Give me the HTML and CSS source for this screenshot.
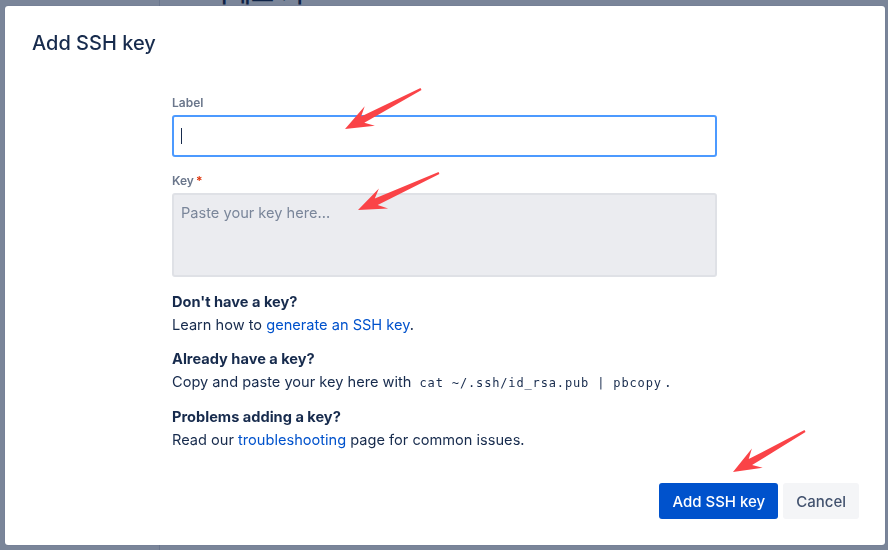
FILE: index.html
```html
<!DOCTYPE html>
<html lang="ko">
<head>
  <meta charset="UTF-8">
  <meta name="viewport" content="width=device-width, initial-scale=1.0">
  <title>Add SSH key</title>
  <link rel="stylesheet" href="styles.css">
</head>
<body>
  <div class="page">
    <div class="sidebar"></div>
    <div class="main">
      <h1 class="page-title">액세스 키</h1>
    </div>
  </div>

  <div class="blanket"></div>

  <div class="dialog">
    <div class="dialog-header">
      <h2>Add SSH key</h2>
    </div>
    <div class="dialog-body">
      <form class="form">
        <label class="field-label" for="label">Label</label>
        <div class="text-input focused"><span class="caret"></span></div>

        <label class="field-label" for="key">Key<span class="required">*</span></label>
        <div class="textarea">Paste your key here...</div>

        <div class="help">
          <h4>Don't have a key?</h4>
          <p>Learn how to <a href="#">generate an SSH key</a>.</p>
        </div>
        <div class="help">
          <h4>Already have a key?</h4>
          <p>Copy and paste your key here with <code>cat ~/.ssh/id_rsa.pub | pbcopy</code>.</p>
        </div>
        <div class="help">
          <h4>Problems adding a key?</h4>
          <p>Read our <a href="#">troubleshooting</a> page for common issues.</p>
        </div>
      </form>
    </div>
    <div class="dialog-footer">
      <button class="btn primary">Add SSH key</button>
      <button class="btn subtle">Cancel</button>
    </div>
  </div>

  <!-- annotation arrows -->
  <svg class="arrows" width="888" height="550" viewBox="0 0 888 550">
    <polygon points="345,129 374.9,125.7 364.3,122.8 421.5,89.9 420.5,88.1 361.1,116.6 364.7,106.3" />
    <polygon points="358,210 388.1,208.4 377.7,204.9 439.4,173.9 438.6,172.1 374.8,198.5 378.9,188.4" />
    <polygon points="733,472 762.7,467.8 752.1,465.1 805.5,431.9 804.5,430.1 748.7,459.1 751.9,448.6" />
  </svg>
</body>
</html>
```

FILE: styles.css
```css
body {
  margin: 0;
  font-family: Inter, "Noto Sans", "Noto Sans CJK KR", sans-serif;
  background: #fff;
  overflow: hidden;
}
.page {
  display: flex;
  height: 550px;
}
.sidebar {
  width: 159px;
  border-right: 1px solid #dfe1e6;
}
.main {
  flex: 1;
  padding-left: 45px;
}
.page-title {
  margin: -24px 0 0;
  font-size: 25px;
  line-height: 30px;
  font-weight: 500;
  color: #172b4d;
  font-family: "Noto Sans CJK KR", sans-serif;
}
.blanket {
  position: fixed;
  inset: 0;
  background: rgba(9, 30, 66, 0.54);
}
.dialog {
  position: fixed;
  left: 5px;
  top: 6px;
  width: 880px;
  height: 539px;
  background: #fff;
  border-radius: 3px;
  display: flex;
  flex-direction: column;
  box-shadow: 0 0 1px rgba(9,30,66,0.3);
}
.dialog-header {
  padding: 25px 27px 0;
}
.dialog-header h2 {
  margin: 0;
  font-size: 20px;
  font-weight: 500;
  line-height: 24px;
  color: #172b4d;
}
.dialog-body {
  flex: 1;
  padding-left: 167px;
}
.form {
  width: 545px;
  margin-top: 40px;
}
.field-label {
  display: block;
  font-size: 12px;
  font-weight: 600;
  line-height: 16px;
  color: #6b778c;
  margin-bottom: 4px;
}
.required {
  color: #de350b;
  margin-left: 2px;
}
.text-input {
  height: 42px;
  box-sizing: border-box;
  border: 2px solid #4c9aff;
  border-radius: 3px;
  background: #fff;
  display: flex;
  align-items: center;
  padding-left: 7px;
  margin-bottom: 16px;
}
.caret {
  width: 1px;
  height: 16px;
  background: #172b4d;
}
.textarea {
  height: 84px;
  box-sizing: border-box;
  background: #ebecf0;
  border: 2px solid #dfe1e6;
  border-radius: 3px;
  padding: 8px 7px;
  font-size: 14.6px;
  line-height: 20px;
  color: #7a869a;
  margin-bottom: 15px;
}
.help {
  margin-bottom: 14px;
}
.help h4 {
  margin: 0 0 3px;
  font-size: 14.6px;
  font-weight: 700;
  line-height: 20px;
  color: #172b4d;
}
.help p {
  margin: 0;
  font-size: 14.6px;
  line-height: 20px;
  color: #172b4d;
}
.help a {
  color: #0052cc;
  text-decoration: none;
}
.help code {
  font-family: "DejaVu Sans Mono", monospace;
  font-size: 12px;
  letter-spacing: 0.85px;
  padding: 0 4px;
  color: #172b4d;
}
.dialog-footer {
  display: flex;
  justify-content: flex-end;
  gap: 5px;
  padding: 0 26px 26px;
}
.btn {
  height: 36px;
  border: none;
  border-radius: 3px;
  padding: 0 13px;
  font-family: inherit;
  font-size: 15px;
  font-weight: 500;
  cursor: pointer;
}
.primary {
  background: #0052cc;
  color: #fff;
}
.subtle {
  background: #f4f5f7;
  color: #42526e;
}
.arrows {
  position: fixed;
  left: 0;
  top: 0;
  pointer-events: none;
}
.arrows polygon {
  fill: #fa4347;
}
```
